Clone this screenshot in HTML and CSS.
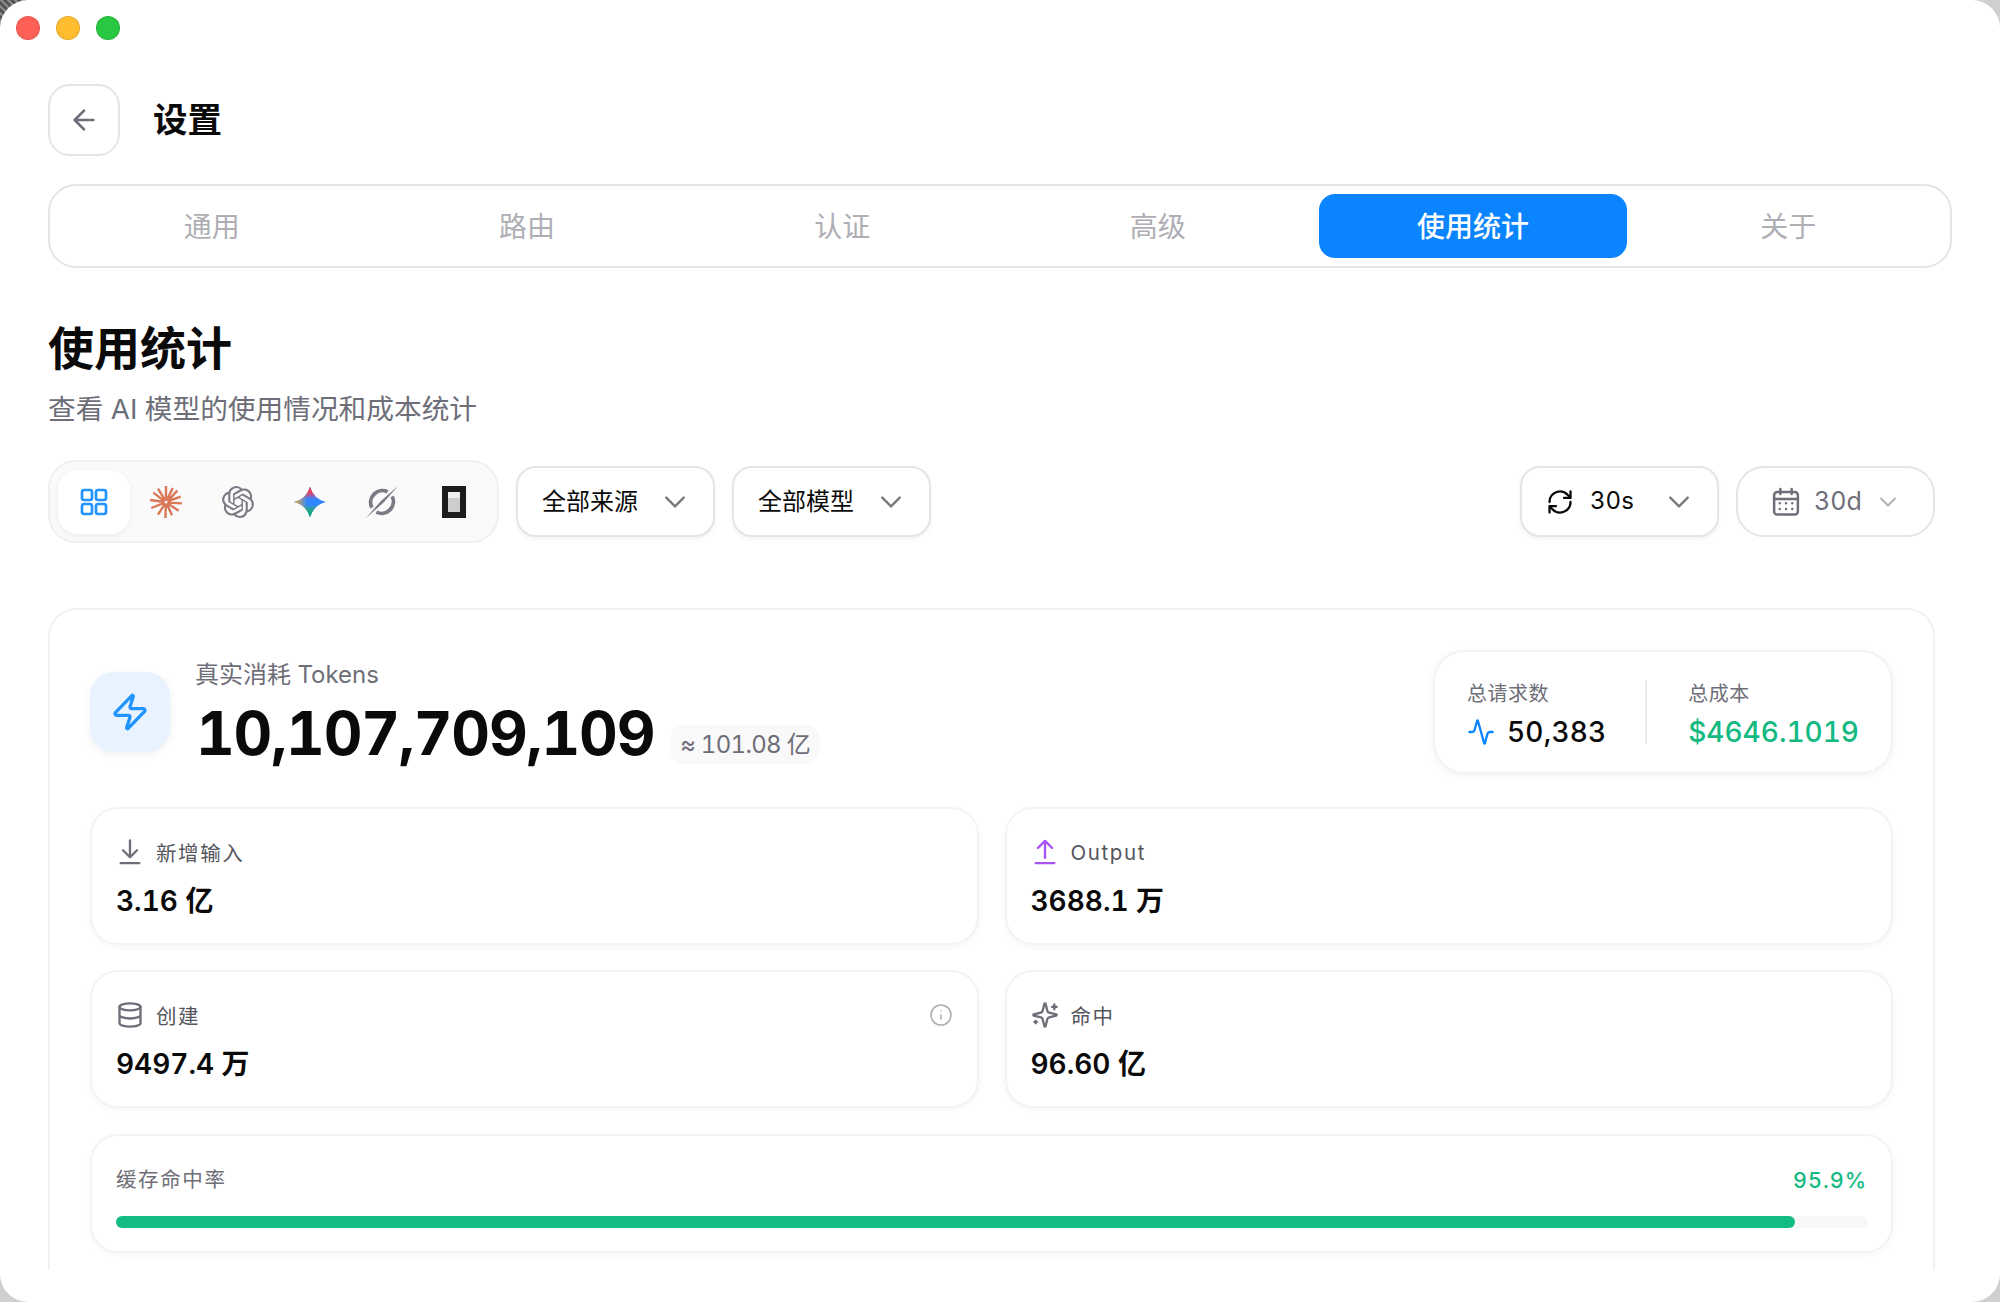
FILE: index.html
```html
<!DOCTYPE html>
<html lang="zh-CN">
<head>
<meta charset="utf-8">
<title>设置</title>
<link rel="stylesheet" href="styles.css">
</head>
<body>
<div class="window">
  <div class="traffic">
    <span class="light red"></span><span class="light yellow"></span><span class="light green"></span>
  </div>
  <header class="topbar">
    <button class="back"><svg class="ic32" viewBox="0 0 24 24"><path d="M12 19l-7-7 7-7M19 12H5"/></svg></button>
    <h1 class="title">设置</h1>
  </header>
  <nav class="tabs">
    <div class="tab">通用</div><div class="tab">路由</div><div class="tab">认证</div><div class="tab">高级</div><div class="tab active">使用统计</div><div class="tab">关于</div>
  </nav>
  <main class="content">
    <h2 class="heading">使用统计</h2>
    <p class="sub">查看 AI 模型的使用情况和成本统计</p>
    <div class="filters">
      <div class="providers">
        <div class="prov on"><svg class="ic32 blue" viewBox="0 0 24 24"><rect x="3" y="3" width="7.5" height="7.5" rx="1.5"/><rect x="13.5" y="3" width="7.5" height="7.5" rx="1.5"/><rect x="3" y="13.5" width="7.5" height="7.5" rx="1.5"/><rect x="13.5" y="13.5" width="7.5" height="7.5" rx="1.5"/></svg></div>
        <div class="prov"><svg class="ic32 claude" viewBox="0 0 24 24"><path d="M12 11 12 0M12.500 11 17 1.500M13 11.500 20.500 3.500M13 11.500 23 8M13 12.500 24 13M13 13 21.500 18.500M12.500 13 16.500 22M12 13 11.500 24.500M11.500 13 6 21.500M11 12.500 1 16.500M11 12 0 10.500M11 11.500 2.500 5M11.500 11 6 2"/></svg></div>
        <div class="prov"><svg class="ic32 fillgray" viewBox="0 0 24 24"><path d="M22.2819 9.8211a5.9847 5.9847 0 0 0-.5157-4.9108 6.0462 6.0462 0 0 0-6.5098-2.9A6.0651 6.0651 0 0 0 4.9807 4.1818a5.9847 5.9847 0 0 0-3.9977 2.9 6.0462 6.0462 0 0 0 .7427 7.0966 5.98 5.98 0 0 0 .511 4.9107 6.051 6.051 0 0 0 6.5146 2.9001A5.9847 5.9847 0 0 0 13.2599 24a6.0557 6.0557 0 0 0 5.7718-4.2058 5.9894 5.9894 0 0 0 3.9977-2.9001 6.0557 6.0557 0 0 0-.7475-7.0729zm-9.022 12.6081a4.4755 4.4755 0 0 1-2.8764-1.0408l.1419-.0804 4.7783-2.7582a.7948.7948 0 0 0 .3927-.6813v-6.7369l2.02 1.1686a.071.071 0 0 1 .038.052v5.5826a4.504 4.504 0 0 1-4.4945 4.4944zm-9.6607-4.1254a4.4708 4.4708 0 0 1-.5346-3.0137l.142.0852 4.783 2.7582a.7712.7712 0 0 0 .7806 0l5.8428-3.3685v2.3324a.0804.0804 0 0 1-.0332.0615L9.74 19.9502a4.4992 4.4992 0 0 1-6.1408-1.6464zM2.3408 7.8956a4.485 4.485 0 0 1 2.3655-1.9728V11.6a.7664.7664 0 0 0 .3879.6765l5.8144 3.3543-2.0201 1.1685a.0757.0757 0 0 1-.071 0l-4.8303-2.7865A4.504 4.504 0 0 1 2.3408 7.872zm16.5963 3.8558L13.1038 8.364 15.1192 7.2a.0757.0757 0 0 1 .071 0l4.8303 2.7913a4.4944 4.4944 0 0 1-.6765 8.1042v-5.6772a.79.79 0 0 0-.407-.667zm2.0107-3.0231l-.142-.0852-4.7735-2.7818a.7759.7759 0 0 0-.7854 0L9.409 9.2297V6.8974a.0662.0662 0 0 1 .0284-.0615l4.8303-2.7866a4.4992 4.4992 0 0 1 6.6802 4.66zM8.3065 12.863l-2.02-1.1638a.0804.0804 0 0 1-.038-.0567V6.0742a4.4992 4.4992 0 0 1 7.3757-3.4537l-.142.0805L8.704 5.459a.7948.7948 0 0 0-.3927.6813zm1.0976-2.3654l2.602-1.4998 2.6069 1.4998v2.9994l-2.5974 1.4997-2.6067-1.4997Z"/></svg></div>
        <div class="prov"><svg class="ic32" viewBox="0 0 24 24"><defs><linearGradient id="gl" x1="0" y1="0" x2="1" y2="0"><stop offset="0" stop-color="#f7b520"/><stop offset=".42" stop-color="#f0a030" stop-opacity="0"/></linearGradient><linearGradient id="gt" x1="0" y1="0" x2="0" y2="1"><stop offset="0" stop-color="#e8405a"/><stop offset=".2" stop-color="#e8405a"/><stop offset=".42" stop-color="#c85a90" stop-opacity="0"/></linearGradient><linearGradient id="gb" x1="0" y1="1" x2="0" y2="0"><stop offset="0" stop-color="#0fa37f"/><stop offset=".2" stop-color="#1ba77a"/><stop offset=".42" stop-color="#40b070" stop-opacity="0"/></linearGradient><path id="gemstar" d="M12 .5Q14.500 9.500 24 12 14.500 14.500 12 23.500 9.500 14.500 0 12 9.500 9.500 12 .5Z"/></defs><use href="#gemstar" class="g-base"/><use href="#gemstar" class="g-top"/><use href="#gemstar" class="g-bot"/><use href="#gemstar" class="g-left"/></svg></div>
        <div class="prov"><svg class="ic32" viewBox="0 0 24 24"><path class="ringstroke" d="M16.200 4.400A8.800 8.800 0 0 0 4.400 16.200M7.800 19.600A8.800 8.800 0 0 0 19.600 7.800"/><path class="slash" d="M24 0 13 12.600 0 24 11 11.400Z"/></svg></div>
        <div class="prov"><svg class="ic32" viewBox="0 0 24 32"><rect class="kblack" x="0" y="0" width="24" height="32"/><rect class="klight" x="6" y="6" width="12" height="6.500"/><rect class="kgray" x="6" y="12" width="12" height="14"/></svg></div>
      </div>
      <div class="select"><span>全部来源</span><svg class="chev" viewBox="0 0 24 24"><path d="m5 8.500 7 7 7-7"/></svg></div>
      <div class="select"><span>全部模型</span><svg class="chev" viewBox="0 0 24 24"><path d="m5 8.500 7 7 7-7"/></svg></div>
      <div class="spacer"></div>
      <div class="select refresh"><svg class="ic28 dark" viewBox="0 0 24 24"><path d="M3 12a9 9 0 0 1 15.500-6.200L21 8.200M21 3v5.500h-5.500"/><path d="M21 12a9 9 0 0 1-15.500 6.200L3 15.800M3 21v-5.500h5.500"/></svg><span class="val">30s</span><svg class="chev" viewBox="0 0 24 24"><path d="m5 8.500 7 7 7-7"/></svg></div>
      <div class="select date"><svg class="ic30" viewBox="0 0 24 24"><rect x="2.500" y="4" width="19" height="18" rx="2.500"/><path d="M2.500 9.500h19M7.500 1.500v4M16.500 1.500v4"/><path class="dots" d="M7 13h.01M12 13h.01M17 13h.01M7 17.500h.01M12 17.500h.01M17 17.500h.01"/></svg><span class="val">30d</span><svg class="chev small" viewBox="0 0 24 24"><path d="m5 8.500 7 7 7-7"/></svg></div>
    </div>
    <section class="panel">
      <div class="hero">
        <div class="bolt"><svg class="ic40 blue" viewBox="0 0 24 24"><path d="M4 14a1 1 0 0 1-.78-1.630l9.900-10.200a.5.5 0 0 1 .86.46l-1.920 6.020A1 1 0 0 0 13 10h7a1 1 0 0 1 .78 1.630l-9.900 10.200a.5.5 0 0 1-.86-.46l1.920-6.020A1 1 0 0 0 11 14z"/></svg></div>
        <div class="hero-main">
          <div class="hero-label">真实消耗 Tokens</div>
          <div class="hero-row"><span class="hero-num">10,107,709,109</span><span class="badge">≈ 101.08 亿</span></div>
        </div>
        <div class="totals">
          <div class="tot first">
            <div class="tot-label">总请求数</div>
            <div class="tot-val"><svg class="ic28 azure" viewBox="0 0 24 24"><path d="M22 12h-2.480a2 2 0 0 0-1.930 1.460l-2.350 8.360a.25.25 0 0 1-.48 0L9.240 2.180a.25.25 0 0 0-.48 0l-2.350 8.360A2 2 0 0 1 4.490 12H2"/></svg><span>50,383</span></div>
          </div>
          <div class="tot">
            <div class="tot-label">总成本</div>
            <div class="tot-val green-text">$4646.1019</div>
          </div>
        </div>
      </div>
      <div class="metrics">
        <div class="metric">
          <div class="m-label"><svg class="ic28" viewBox="0 0 24 24"><path d="M12 2v14M6 10.500l6 6 6-6M4 21.500h16"/></svg><span>新增输入</span></div>
          <div class="m-val">3.16 亿</div>
        </div>
        <div class="metric">
          <div class="m-label"><svg class="ic28 purple" viewBox="0 0 24 24"><path d="M12 17V3M6 8.500l6-6 6 6M4 21.500h16"/></svg><span>Output</span></div>
          <div class="m-val">3688.1 万</div>
        </div>
        <div class="metric">
          <div class="m-label"><svg class="ic28" viewBox="0 0 24 24"><ellipse cx="12" cy="5" rx="9" ry="3"/><path d="M3 5v14a9 3 0 0 0 18 0V5M3 12a9 3 0 0 0 18 0"/></svg><span>创建</span><svg class="ic24 info" viewBox="0 0 24 24"><circle cx="12" cy="12" r="10"/><path d="M12 16v-4M12 8h.01"/></svg></div>
          <div class="m-val">9497.4 万</div>
        </div>
        <div class="metric">
          <div class="m-label"><svg class="ic28" viewBox="0 0 24 24"><path d="M9.937 15.500A2 2 0 0 0 8.500 14.063l-6.135-1.582a.5.5 0 0 1 0-.962L8.500 9.936A2 2 0 0 0 9.937 8.500l1.582-6.135a.5.5 0 0 1 .963 0L14.063 8.500A2 2 0 0 0 15.500 9.937l6.135 1.581a.5.5 0 0 1 0 .964L15.500 14.063a2 2 0 0 0-1.437 1.437l-1.582 6.135a.5.5 0 0 1-.963 0zM20 3v4M22 5h-4M4 17v2M5 18H3"/></svg><span>命中</span></div>
          <div class="m-val">96.60 亿</div>
        </div>
      </div>
      <div class="rate">
        <div class="rate-head"><span>缓存命中率</span><span class="rate-val">95.9%</span></div>
        <div class="track"><div class="fill"></div></div>
      </div>
    </section>
  </main>
</div>
</body>
</html>
```
FILE: styles.css
```css
* { box-sizing: border-box; }
html, body { margin: 0; height: 100%; }
body {
  width: 2000px;
  height: 1302px;
  overflow: hidden;
  background: repeating-linear-gradient(45deg, #555 0 3px, #8a8a8a 3px 5px) 0 0 / 26px 26px no-repeat, #cfcfcf;
  font-family: Inter, "Noto Sans CJK SC", sans-serif;
  font-variant-numeric: tabular-nums;
  color: #0a0a0a;
}
.window {
  width: 2000px;
  height: 1302px;
  background: #fff;
  border-radius: 28px;
  overflow: hidden;
  display: flex;
  flex-direction: column;
}
.traffic { display: flex; gap: 16px; padding: 16px 0 0 16px; height: 84px; flex: none; }
.light { width: 24px; height: 24px; border-radius: 50%; border: 1px solid rgba(0,0,0,.1); }
.red { background: #ff5f57; }
.yellow { background: #febc2e; }
.green { background: #28c840; }
.topbar { display: flex; align-items: center; gap: 33px; padding-left: 48px; flex: none; }
.back {
  width: 72px; height: 72px; border-radius: 22px;
  border: 2px solid #e5e5e7; background: #fff;
  display: flex; align-items: center; justify-content: center; padding: 0;
}
.title { margin: 0; font-size: 34.500px; font-weight: 700; line-height: 44px; color: #0a0a0a; }
svg { fill: none; stroke: #6e6e78; stroke-width: 2; stroke-linecap: round; stroke-linejoin: round; flex: none; display: block; }
.ic24 { width: 24px; height: 24px; }
.ic28 { width: 28px; height: 28px; }
.ic30 { width: 30px; height: 30px; }
.ic32 { width: 32px; height: 32px; }
.ic40 { width: 40px; height: 40px; }
.blue { stroke: #2294ff; }
.azure { stroke: #0a84ff; }
.dark { stroke: #0a0a0a; }
.purple { stroke: #a855f7; }
.claude { stroke: #d97757; stroke-width: 1.800; stroke-linecap: butt; }
.fillgray { fill: #7a7a84; stroke: none; }
.g-base { fill: #2f86ff; stroke: none; }
.g-top { fill: url(#gt); stroke: none; }
.g-bot { fill: url(#gb); stroke: none; }
.g-left { fill: url(#gl); stroke: none; }
.ringstroke { stroke: #7a7a84; stroke-width: 2.800; stroke-linecap: butt; }
.slash { fill: #7a7a84; stroke: none; }
.kblack { fill: #1c1c1c; stroke: none; }
.klight { fill: #f0f0f0; stroke: none; }
.kgray { fill: #cdcdcd; stroke: none; }

.tabs {
  margin: 28px 48px 0 48px;
  height: 84px; flex: none;
  border: 2px solid #e5e5e7; border-radius: 28px;
  padding: 8px;
  display: grid; grid-template-columns: repeat(6, 1fr); gap: 8px;
}
.tab {
  display: flex; align-items: center; justify-content: center;
  border-radius: 16px; height: 64px;
  font-size: 28px; padding-bottom: 2px; color: #aeaeb4;
}
.tab.active { background: #0a84ff; color: #fff; font-weight: 500; }

.content {
  flex: 1; min-height: 0; overflow: hidden;
  margin: 0 65px 32px 48px;
  padding-top: 50px;
}
.heading { margin: 0; font-size: 46px; line-height: 60px; font-weight: 700; color: #0a0a0a; }
.sub { margin: 11px 0 0; font-size: 27.700px; line-height: 40px; color: #6e6e78; }
.filters { display: flex; align-items: center; margin-top: 31px; gap: 17px; }
.providers {
  height: 83px; padding: 7.500px;
  border: 2px solid #f0f0f1; border-radius: 28px; background: #fafafa;
  display: flex; align-items: center;
}
.prov { width: 72px; height: 64px; border-radius: 20px; display: flex; align-items: center; justify-content: center; }
.prov.on { background: #fff; box-shadow: 0 2px 6px rgba(0,0,0,.06); }
.select {
  width: 199px; height: 71px; border-radius: 20px;
  border: 2px solid #e5e5e7; background: #fff;
  box-shadow: 0 2px 4px rgba(0,0,0,.05);
  display: flex; align-items: center; justify-content: space-between;
  padding: 0 23px 0 24px;
  font-size: 24px; color: #0a0a0a;
}
.select > span { padding-bottom: 4px; }
.refresh, .date { justify-content: flex-start; }
.refresh .val { margin-left: 16px; flex: 1; font-size: 24px; padding-bottom: 2px; }
.date { border-radius: 28px; box-shadow: none; padding-left: 33px; padding-right: 33px; }
.date .val { margin-left: 13px; flex: 1; color: #6e6e78; font-size: 25px; padding-bottom: 2px; }
.chev { width: 30px; height: 30px; stroke: #7a7a7e; stroke-width: 1.900; }
.chev.small { width: 24px; height: 24px; stroke: #aeaeb4; }
.spacer { flex: 1; }

.panel {
  margin-top: 65px;
  border: 2px solid #f1f1f3; border-bottom: 0; border-radius: 28px 28px 0 0;
  padding: 40px;
  height: 700px;
}
.hero { display: flex; align-items: center; height: 124px; }
.bolt {
  width: 80px; height: 80px; border-radius: 24px; background: #e8f3ff;
  box-shadow: 0 3px 8px rgba(0,0,0,.06);
  display: flex; align-items: center; justify-content: center; flex: none;
}
.hero-main { margin-left: 25px; flex: 1; }
.hero-label { font-size: 24px; line-height: 32px; color: #6e6e78; }
.hero-row { display: flex; align-items: flex-end; gap: 16px; margin-top: 9px; margin-left: 1px; }
.hero-num { font-size: 60px; font-weight: 700; line-height: 66px; letter-spacing: -1.200px; color: #0a0a0a; }
.badge { font-size: 24px; letter-spacing: -.700px; color: #6e6e78; background: #f9f9fa; border-radius: 14px; padding: 0 10px; height: 39px; line-height: 39px; margin-bottom: 2px; }
.totals {
  width: 460px; height: 124px; flex: none;
  border: 2px solid #f3f3f4; border-radius: 32px; background: #fff;
  box-shadow: 0 2px 8px rgba(0,0,0,.05);
  padding: 28px 32px;
  display: flex;
}
.tot.first { width: 190px; border-right: 2px solid #ececee; margin-right: 41px; }
.tot-label { font-size: 20px; line-height: 28px; color: #6e6e78; letter-spacing: .5px; }
.tot-val { display: flex; align-items: center; gap: 12px; font-size: 28px; font-weight: 500; line-height: 36px; letter-spacing: .2px; margin-top: 6px; }
.green-text { color: #12b981; letter-spacing: 0; }
.metrics { display: grid; grid-template-columns: 1fr 1fr; gap: 25px 26px; margin-top: 33px; }
.metric, .rate {
  border: 2px solid #f3f3f4; border-radius: 28px; background: #fff;
  box-shadow: 0 2px 6px rgba(0,0,0,.04);
}
.metric { height: 138px; padding: 23px 24px; }
.m-label { display: flex; align-items: center; gap: 12px; height: 40px; font-size: 20.500px; color: #55555c; letter-spacing: 1.600px; }
.info { margin-left: auto; stroke: #aeaeb4; stroke-width: 1.600; }
.m-val { font-size: 28px; font-weight: 580; line-height: 36px; margin-top: 11px; }
.rate { margin-top: 26px; height: 119px; padding: 26px 24px 0; }
.rate-head { display: flex; justify-content: space-between; font-size: 20.500px; line-height: 36px; color: #6e6e78; letter-spacing: 1.600px; }
.rate-val { color: #12b981; font-weight: 500; font-size: 21.500px; letter-spacing: 1px; }
.track { height: 12px; margin-top: 18px; background: #f7f7f8; border-radius: 6px; }
.fill { width: 95.900%; height: 100%; background: #14bb82; border-radius: 6px; }
```
